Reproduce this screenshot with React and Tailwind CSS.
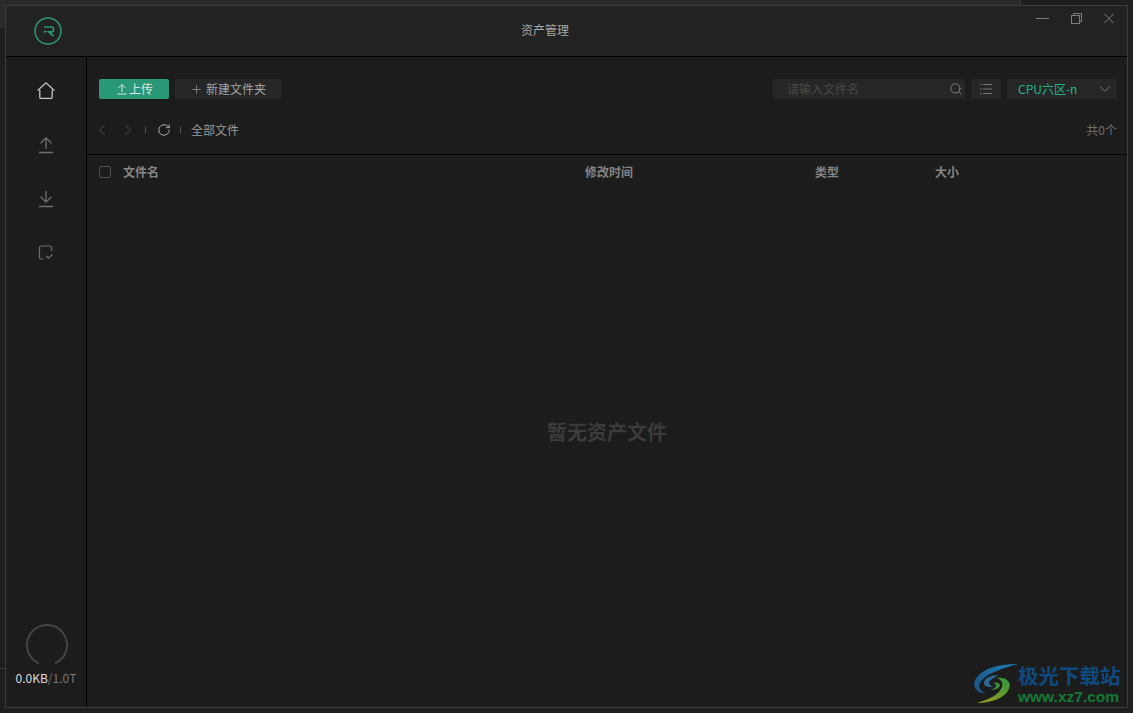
import { ChevronLeft, ChevronRight, ChevronDown, RotateCw, Search, Plus } from 'lucide-react';

const FONT = "font-['Noto_Sans_CJK_SC','Noto_Sans',sans-serif]";

function Logo() {
  return (
    <svg width="28" height="28" viewBox="0 0 28 28" fill="none">
      <circle cx="14" cy="14" r="13" stroke="#2a9779" strokeWidth="1.5" />
      <path d="M10 10h8q1.500 0 1.500 1.500v1.800q0 1.500-1.500 1.500h-3.400l4.800 4.200" stroke="#2a9779" strokeWidth="1.700" />
      <rect x="9.600" y="13.800" width="2.400" height="1.800" fill="#2a9779" />
    </svg>
  );
}

function HomeIcon() {
  return (
    <svg width="20" height="20" viewBox="0 0 20 20" fill="none" stroke="#c4c4c4" strokeWidth="1.3">
      <path d="M1.600 9.600 10 1.800l8.400 7.800" />
      <path d="M3.800 9v7.200q0 1.200 1.200 1.200h10q1.200 0 1.200-1.200V9" />
    </svg>
  );
}

function UploadIcon() {
  return (
    <svg width="16" height="18" viewBox="0 0 16 18" fill="none" stroke="#6e6e6e" strokeWidth="1.3">
      <path d="M8 13V2M2.600 7.200 8 1.800l5.400 5.400M1 16.500h14" />
    </svg>
  );
}

function DownloadIcon() {
  return (
    <svg width="16" height="18" viewBox="0 0 16 18" fill="none" stroke="#6e6e6e" strokeWidth="1.3">
      <path d="M8 1v11M2.600 6.800 8 12.200l5.400-5.400M1 16.500h14" />
    </svg>
  );
}

function TaskIcon() {
  return (
    <svg width="16" height="16" viewBox="0 0 16 16" fill="none" stroke="#6e6e6e" strokeWidth="1.2">
      <path d="M5.500 14H3q-1.500 0-1.500-1.500v-10Q1.500 1 3 1h9q1.500 0 1.500 1.500V6" />
      <path d="m8 11 2.200 2.200L14.500 9.500" />
    </svg>
  );
}

function ListIcon() {
  return (
    <svg width="12" height="12" viewBox="0 0 12 12" fill="none" stroke="#777" strokeWidth="1">
      <path d="M3 1.500h9M3 6h9M3 10.500h9M0 1.500h1.500M0 6h1.500M0 10.500h1.500" />
    </svg>
  );
}

function MinimizeIcon() {
  return (
    <svg width="13" height="11" viewBox="0 0 13 11" fill="none" stroke="#7d7d7d" strokeWidth="1">
      <path d="M0 5.500h13" />
    </svg>
  );
}

function RestoreIcon() {
  return (
    <svg width="11" height="11" viewBox="0 0 11 11" fill="none" stroke="#7d7d7d" strokeWidth="1">
      <rect x="0.500" y="2.500" width="8" height="8" />
      <path d="M2.500 2.500v-2h8v8h-2" />
    </svg>
  );
}

function CloseIcon() {
  return (
    <svg width="10" height="11" viewBox="0 0 10 11" fill="none" stroke="#7d7d7d" strokeWidth="1">
      <path d="m0.500 1 9 9M9.500 1l-9 9" />
    </svg>
  );
}

function StorageRing() {
  return (
    <svg width="42" height="42" viewBox="0 0 42 42" fill="none" className="ml-[2px]">
      <path d="M13 39.400a20 20 0 1 1 16 0" stroke="#444" strokeWidth="2" />
    </svg>
  );
}

function WatermarkSwirl() {
  return (
    <svg width="46" height="40" viewBox="0 0 46 40" fill="none">
      <defs>
        <linearGradient id="swirlBlue" x1="0" y1="1" x2="1" y2="0">
          <stop offset="0" stopColor="#1a4f80" />
          <stop offset="1" stopColor="#1a80b8" />
        </linearGradient>
        <linearGradient id="swirlGreen" x1="0" y1="1" x2="1" y2="0">
          <stop offset="0" stopColor="#a89a20" />
          <stop offset="1" stopColor="#2a9a3a" />
        </linearGradient>
      </defs>
      <path d="M45 1C30 1 12 4 4 14c-6 8-2 16 8 16-6-3-8-8-3-13C15 10 30 5 45 1Z" fill="url(#swirlBlue)" />
      <path d="M26 12c-8 0-15 3-15 8 0 4 6 5 10 3-3 0-5-1-5-3 0-3 5-5 10-8Z" fill="#2a6a94" />
      <path d="M4 40c14 0 28-5 32-14 3-7-3-12-12-11 5 2 7 6 4 11-4 7-14 11-24 14Z" fill="url(#swirlGreen)" />
      <path d="M20 20c4-1 7 0 7 2 0 3-5 5-9 5 3-1 5-3 5-4 0-2-2-3-3-3Z" fill="#3a8a3a" />
    </svg>
  );
}

export default function App() {
  return (
    <div className={`${FONT} relative h-[713px] w-[1133px] overflow-hidden bg-[#1e1e1e] p-[5px] text-xs`}>
      {/* bits of the window behind */}
      <div className="absolute left-0 top-0 h-[5px] w-[1021px] border-r border-[#3a3a3a] bg-[#2a2a2a]" />
      <div className="absolute left-0 top-0 h-[28px] w-[5px] bg-[#2a2a2a]" />
      <div className="absolute left-0 top-[668px] h-px w-[5px] bg-[#3a3a3a]" />

      <div className="relative flex h-[703px] w-[1123px] flex-col border border-[#3d3d3d] bg-[#1c1c1c]">
        {/* Title bar */}
        <header className="relative flex h-[51px] shrink-0 items-center justify-center border-b border-black bg-[#222222] pb-[2px] pr-[43px]">
          <div className="absolute left-[28px] top-[11px]">
            <Logo />
          </div>
          <span className="text-[#a8a8a8]">资产管理</span>
          <div className="absolute right-[13px] top-[7px] flex items-center gap-[22px]">
            <MinimizeIcon />
            <RestoreIcon />
            <CloseIcon />
          </div>
        </header>

        <div className="flex min-h-0 flex-1">
          {/* Sidebar */}
          <aside className="flex w-[81px] shrink-0 flex-col items-center border-r border-black">
            <div className="flex flex-col items-center">
              <div className="flex h-[54px] items-center pt-[14px]">
                <HomeIcon />
              </div>
              <div className="flex h-[54px] items-center pt-[14px]">
                <UploadIcon />
              </div>
              <div className="flex h-[54px] items-center pt-[14px]">
                <DownloadIcon />
              </div>
              <div className="flex h-[54px] items-center pt-[14px]">
                <TaskIcon />
              </div>
            </div>
            <div className="mt-auto flex flex-col items-center pb-[20px]">
              <StorageRing />
              <div className="mt-[3px] leading-[18px] whitespace-nowrap">
                <span className="text-[#dddddd]">0.0KB</span>
                <span className="text-[#777777]">/1.0T</span>
              </div>
            </div>
          </aside>

          {/* Main */}
          <main className="flex min-w-0 flex-1 flex-col">
            <div className="flex h-[98px] shrink-0 flex-col border-b border-black pl-[12px] pr-[10px] pt-[22px]">
              <div className="flex h-[20px] items-center">
                <button className="flex h-[20px] w-[70px] items-center justify-center gap-[2px] rounded-[2px] bg-[#2a9779] pl-[2px] text-[#d8e8e2]">
                  <svg width="10" height="12" viewBox="0 0 10 12" fill="none" stroke="#d8e8e2" strokeWidth="1">
                    <path d="M5 9V1.500M1.500 5 5 1.500 8.500 5M0.500 11h9" />
                  </svg>
                  <span>上传</span>
                </button>
                <button className="ml-[6px] flex h-[20px] w-[106px] items-center justify-center gap-[3px] rounded-[2px] bg-[#262626] text-[#a4a4a4]">
                  <Plus size={13} strokeWidth={1.6} color="#8a8a8a" />
                  <span>新建文件夹</span>
                </button>
                <div className="ml-auto flex h-[20px] w-[192px] items-center justify-between rounded-[2px] bg-[#262626] pl-[14px] pr-[2px]">
                  <span className="text-[#484848]">请输入文件名</span>
                  <Search size={14} strokeWidth={1.3} color="#999" />
                </div>
                <div className="ml-[6px] flex h-[20px] w-[30px] items-center justify-center rounded-[2px] bg-[#262626]">
                  <ListIcon />
                </div>
                <div className="ml-[6px] flex h-[20px] w-[110px] items-center justify-between rounded-[1px] bg-[#262626] pl-[11px] pr-[3px]">
                  <span className="text-[#1fb488]">CPU六区-n</span>
                  <ChevronDown size={18} strokeWidth={1.1} color="#888" />
                </div>
              </div>

              <div className="mt-[21px] flex h-[20px] items-center">
                <ChevronLeft size={20} strokeWidth={1} color="#555" className="-ml-[7px]" />
                <ChevronRight size={20} strokeWidth={1} color="#555" className="ml-[6px]" />
                <span className="ml-[7px] h-[6px] w-px bg-[#555]" />
                <RotateCw size={14} strokeWidth={1.6} color="#b0b0b0" className="ml-[11px]" />
                <span className="ml-[9px] h-[6px] w-px bg-[#555]" />
                <span className="ml-[10px] text-[#9a9a9a]">全部文件</span>
                <span className="ml-auto text-[#6e6e6e]">共0个</span>
              </div>
            </div>

            {/* Table head */}
            <div className="flex h-[34px] shrink-0 items-center pl-[12px] font-bold text-[#858585]">
              <span className="h-[12px] w-[12px] rounded-[2px] border border-[#4d4d4d]" />
              <span className="ml-[12px] w-[462px]">文件名</span>
              <span className="w-[230px]">修改时间</span>
              <span className="w-[120px]">类型</span>
              <span>大小</span>
            </div>

            <div className="flex flex-1 items-center justify-center pb-[31px]">
              <span className="text-[20px] font-bold text-[#3b3b3b]">暂无资产文件</span>
            </div>
          </main>
        </div>
      </div>

      {/* Watermark */}
      <div className="absolute left-[973px] top-[663px] flex items-start">
        <WatermarkSwirl />
        <div className="-ml-[1px] flex flex-col leading-none">
          <span className="text-[20.500px] font-bold leading-[24px] text-[#0e4a82]">极光下载站</span>
          <span className="mt-[2px] font-['Liberation_Sans',sans-serif] text-[15.500px] font-bold leading-[16px] text-[#137a36]">www.xz7.com</span>
        </div>
      </div>
    </div>
  );
}
